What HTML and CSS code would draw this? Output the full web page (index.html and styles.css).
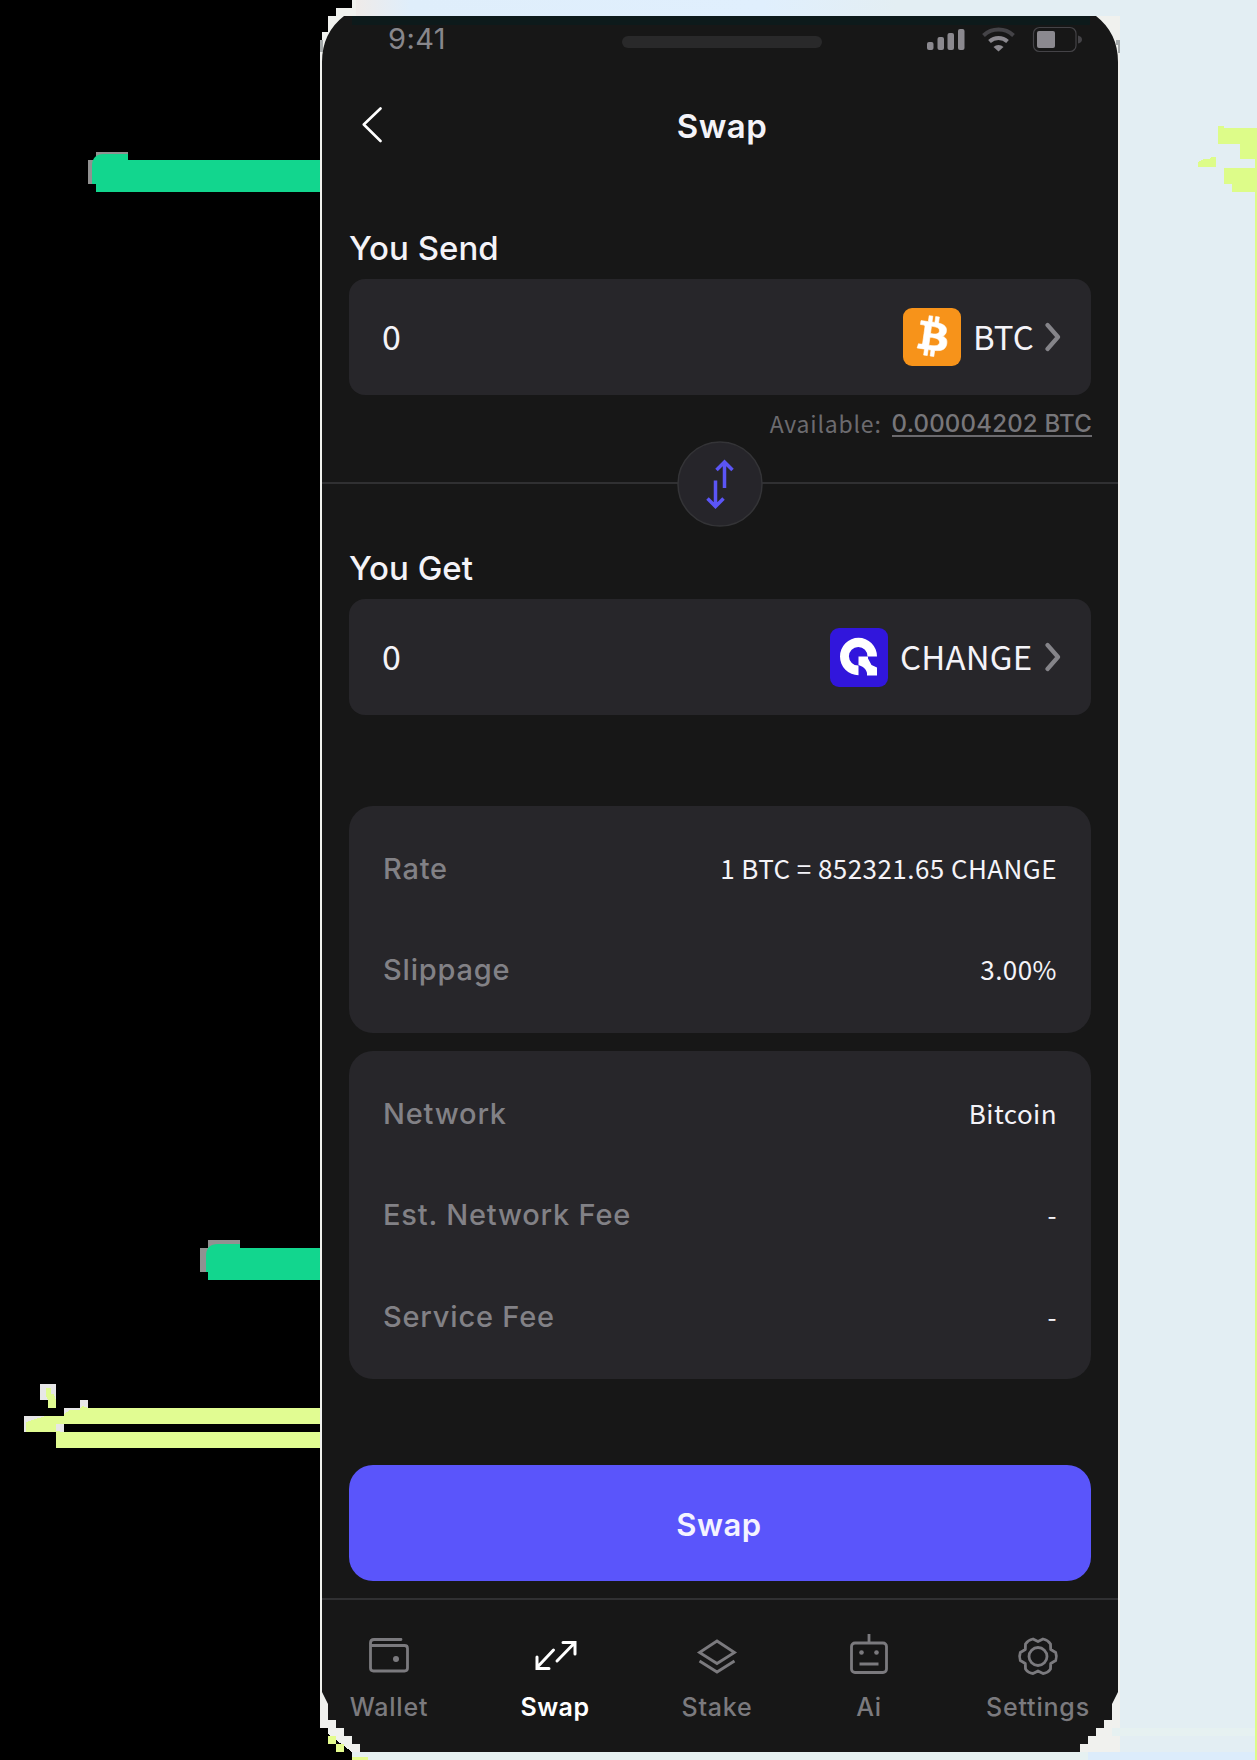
FILE: index.html
```html
<!DOCTYPE html>
<html lang="en">
<head>
<meta charset="utf-8">
<title>Swap</title>
<link rel="stylesheet" href="styles.css">
</head>
<body>
<svg class="backdrop" viewBox="0 0 1257 1760" aria-hidden="true">
  <defs>
    <linearGradient id="sky" x1="0" x2="1" y1="0" y2="0">
      <stop offset="0" stop-color="#efebe9"/><stop offset=".06" stop-color="#dfeefb"/><stop offset=".45" stop-color="#e0effd"/><stop offset=".6" stop-color="#e3eef3"/>
    </linearGradient>
  </defs>
  <g shape-rendering="crispEdges">
    <path fill="#12d68e" d="M96 160h224v32H96z"/>
    <path fill="#919191" d="M96 152h32v8H96zM88 160h8v24h-8z"/>
    <path fill="#12d68e" d="M208 1248h112v32H208z"/>
    <path fill="#919191" d="M208 1240h32v8h-32zM200 1248h8v24h-8z"/>
    <path fill="#e7e7e7" d="M40 1384h16v16H40zM24 1416h24v16H24zM64 1408h16v8H64zM80 1400h8v8h-8zM56 1424h8v8h-8z"/>
    <path fill="#e1fc92" d="M46 1388h5v6h3l2 6v8h-8v-8l-2-4zM26 1432v-10l6-2 14-4h18v-2l6-4h10v-2l3-2 5 2h232v16H64v0h-8v8zM56 1431l8 1h256v16H56z"/>
    <path fill="#f0f1ee" d="M352 0h905v1760H352v-8l-32-24V40h2v-8h-2v0h8V16h8V8h16z"/>
    <path fill="url(#sky)" d="M356 0h901v16H356z"/>
    <path fill="#e3eef3" d="M1120 14h137v1738h-137z"/>
    <path fill="#e6f1f1" d="M352 1752h905v8H352zM1112 1728h145v8h-145z"/>
    <path fill="#dcecfb" d="M1088 1752h167v8h-167z"/>
    <path fill="#000" d="M320 1728h8v8h8v8h8v8h8v8h-32z"/>
    <path fill="#e4fc8e" d="M328 1736h8v8h8v8h-8v-8h-8zM352 1757h16v3h-16z"/>
    <path fill="#ddfc89" d="M1218 126h6v2h33v1632h-2V192h-23v-8h-8v-16h31v-9h-15v-15h-22zM1198 162l6-3 6 0 1-2h5v10h-18z"/>
    <path fill="#a5aaab" d="M320 40h3v12h-3zM1116 40h4v13h-2v-8h-2z"/>
  </g>
  <path fill="#12d68e" d="M92 184v-18q0-12 12-12h24v8h-32v22zM206 1272v-16q0-12 12-12h22v8h-28v20z"/>
  <path fill="#171717" d="M344 16h752q22 17 22 46v1630l-6 12v16h-8v8h-8v8h-8v8h-8v8H360v-8h-8v-8h-8v-8h-8v-8h-8v-16l-6-12V62q0-29 22-46z"/>
  <path fill="#0d1a1b" d="M352 16h738v9H352z"/>
</svg>

<main class="phone">
  <div class="status">
    <span class="time">9:41</span>
    <span class="speaker"></span>
    <svg class="indicators" width="160" height="28" viewBox="0 0 160 28">
      <g fill="#8b898f">
        <rect x="1" y="16" width="6.5" height="8" rx="2"/><rect x="11.5" y="11" width="6.5" height="13" rx="2"/><rect x="21.5" y="7" width="6.5" height="17" rx="2"/><rect x="32" y="3" width="6.5" height="21" rx="2"/>
        <path d="M72.500 25.500L67.500 21a7.500 7.500 0 0 1 10 0z"/>
      </g>
      <path d="M63.500 15.500a13.500 13.500 0 0 1 18 0" fill="none" stroke="#8b898f" stroke-width="4"/>
      <path d="M57.500 9.500a22 22 0 0 1 30 0" fill="none" stroke="#444347" stroke-width="4"/>
      <rect x="107.500" y="1.500" width="42.500" height="24" rx="6" fill="none" stroke="#444347" stroke-width="1.200"/>
      <rect x="111" y="5" width="18" height="17" rx="2" fill="#8b898f"/>
      <path d="M152 9.500v8q4-1 4-4t-4-4z" fill="#444347"/>
    </svg>
  </div>

  <header class="header">
    <svg class="back" width="22" height="38" viewBox="0 0 22 38"><path d="M18.500 1.500L1.800 17.500l16.700 16.500" fill="none" stroke="#fff" stroke-width="2.600" stroke-linecap="round" stroke-linejoin="round"/></svg>
    <h1 class="title">Swap</h1>
  </header>

  <section class="send">
    <h2 class="label">You Send</h2>
    <div class="field">
      <span class="amount">0</span>
      <svg class="coin" width="58" height="58" viewBox="0 0 58 58">
        <rect width="58" height="58" rx="9" fill="#f7931a"/>
        <path transform="translate(29 28.500) rotate(-6) scale(2.060) translate(-15.900 -16.200)" fill="#fff" stroke="#fff" stroke-width=".3" d="M23.189 14.020c.314-2.096-1.283-3.223-3.465-3.975l.708-2.840-1.728-.430-.690 2.765c-.454-.114-.920-.220-1.385-.326l.695-2.783L15.596 6l-.708 2.839c-.376-.086-.746-.170-1.104-.260l.002-.009-2.384-.595-.460 1.846s1.283.294 1.256.312c.700.175.826.638.805 1.006l-.806 3.235c.048.012.110.030.180.057l-.183-.045-1.130 4.532c-.086.212-.303.531-.793.410.018.025-1.256-.313-1.256-.313l-.858 1.978 2.250.561c.418.105.828.215 1.231.318l-.715 2.872 1.727.430.708-2.840c.472.127.930.245 1.378.357l-.706 2.828 1.728.430.715-2.866c2.948.558 5.164.333 6.097-2.333.752-2.146-.037-3.385-1.588-4.192 1.130-.260 1.980-1.003 2.207-2.538zm-3.950 5.538c-.533 2.147-4.148.986-5.320.695l.950-3.805c1.172.293 4.929.872 4.370 3.110zm.535-5.569c-.487 1.953-3.495.960-4.470.717l.860-3.450c.975.243 4.118.696 3.610 2.733z"/>
      </svg>
      <span class="coin-name btc">BTC</span>
      <svg class="chevron" width="16" height="30" viewBox="0 0 16 30"><path d="M2.500 3L13 15 2.500 27" fill="none" stroke="#858489" stroke-width="4.200" stroke-linecap="round" stroke-linejoin="round"/></svg>
    </div>
    <p class="available"><span class="available-label">Available:</span><span class="available-value">0.00004202 BTC</span></p>
  </section>

  <div class="divider">
    <svg class="flip" width="86" height="86" viewBox="0 0 86 86"><circle cx="43" cy="43" r="42" fill="#26252a" stroke="#343437" stroke-width="1.500"/><g fill="none" stroke="#5b55f6" stroke-width="3.500"><path d="M47.500 47V22M39.500 29l8-8 8 8"/><path d="M38.500 39.500V65M30.500 57.500l8 8 8-8"/></g></svg>
  </div>

  <section class="get">
    <h2 class="label">You Get</h2>
    <div class="field">
      <span class="amount">0</span>
      <svg class="coin" width="58" height="59" viewBox="0 0 58 59">
        <rect width="58" height="59" rx="9" fill="#3116dc"/>
        <path fill="#fff" d="M47 28.500A18.500 18.800 0 1 0 28.500 47.300V37.500A9.300 9.300 0 1 1 37.500 28.500z"/>
        <path fill="#fff" d="M28.500 28.500h9.500v2l3.500 6.500 5.500 2.500v8H37v-2.500Q36 40.500 32 38.500L28.500 37z"/>
      </svg>
      <span class="coin-name change">CHANGE</span>
      <svg class="chevron" width="16" height="30" viewBox="0 0 16 30"><path d="M2.500 3L13 15 2.500 27" fill="none" stroke="#858489" stroke-width="4.200" stroke-linecap="round" stroke-linejoin="round"/></svg>
    </div>
  </section>

  <dl class="card rates">
    <div class="row"><dt>Rate</dt><dd class="rate">1 BTC = 852321.65 CHANGE</dd></div>
    <div class="row"><dt>Slippage</dt><dd>3.00%</dd></div>
  </dl>
  <dl class="card fees">
    <div class="row"><dt>Network</dt><dd class="network">Bitcoin</dd></div>
    <div class="row"><dt>Est. Network Fee</dt><dd>-</dd></div>
    <div class="row"><dt>Service Fee</dt><dd>-</dd></div>
  </dl>

  <button class="submit">Swap</button>

  <nav class="tabs">
    <a class="tab wallet">
      <svg width="44" height="44" viewBox="0 0 44 44"><g fill="none" stroke="#7b7a7e" stroke-width="2.800" stroke-linecap="round"><path d="M34 5.500H7q-3.500 0-3.500 3.500v25q0 3 3 3h31q3 0 3-3V14.500q0-3-3-3H4"/></g><circle cx="29" cy="25" r="3" fill="#7b7a7e"/></svg>
      <span>Wallet</span>
    </a>
    <a class="tab swap active">
      <svg width="44" height="44" viewBox="0 0 44 44"><path d="M20.500 16L4 33.500M4 23v11.500h12M24 27L41 9.500M30 8.500h12V20" fill="none" stroke="#fff" stroke-width="3" stroke-linecap="round"/></svg>
      <span>Swap</span>
    </a>
    <a class="tab stake">
      <svg width="44" height="44" viewBox="0 0 44 44"><path d="M22 7l17.500 11.500-17.500 11-17.500-11zM4.500 27L22 38l17.500-11" fill="none" stroke="#7b7a7e" stroke-width="2.800"/></svg>
      <span>Stake</span>
    </a>
    <a class="tab ai">
      <svg width="44" height="44" viewBox="0 0 44 44"><g fill="none" stroke="#7b7a7e" stroke-width="2.800"><rect x="4.500" y="9" width="35" height="29.500" rx="3.500"/><path d="M22 0v9M12.500 30h19"/></g><circle cx="14.500" cy="18.500" r="2.300" fill="#7b7a7e"/><circle cx="29.500" cy="18.500" r="2.300" fill="#7b7a7e"/></svg>
      <span>Ai</span>
    </a>
    <a class="tab settings">
      <svg width="44" height="44" viewBox="0 0 44 44"><g fill="none" stroke="#7b7a7e" stroke-width="2.800" stroke-linejoin="round"><path d="M22 7.500l5-2.500q5 1 7.500 5l.200 5.500 5 3q1.500 4 0 8l-5 3-.200 5.500q-2.500 4-7.500 4.500l-5-2.500-5 2.500q-5-.500-7.500-4.500l-.200-5.500-5-3q-1.500-4 0-8l5-3 .200-5.500q2.500-4 7.500-5z"/><circle cx="22" cy="22.500" r="9"/></g></svg>
      <span>Settings</span>
    </a>
  </nav>
</main>
</body>
</html>
```

FILE: styles.css
```css
* { box-sizing: border-box; }
body {
  margin: 0;
  width: 1257px;
  height: 1760px;
  overflow: hidden;
  background: #000;
  color: #f4f3f8;
  font-family: Inter, "Liberation Sans", sans-serif;
}
h1, h2, p, dl, dd { margin: 0; }
.backdrop {
  position: absolute;
  z-index: -1;
  top: 0;
  left: 0;
  width: 1257px;
  height: 1760px;
}
.phone {
  display: flex;
  flex-direction: column;
  width: 796px;
  height: 1752px;
  margin-left: 322px;
  padding-top: 16px;
}
.status {
  display: grid;
  grid-template-columns: 300px 200px 1fr;
  height: 50px;
}
.time {
  padding: 6px 0 0 66px;
  color: #88878c;
  font-size: 29px;
  line-height: 34px;
  letter-spacing: .4px;
}
.speaker {
  height: 12px;
  margin-top: 20px;
  border-radius: 6px;
  background: #29292a;
}
.indicators { margin: 10px 0 0 104px; }
.header {
  display: grid;
  grid-template-columns: 62px 1fr 58px;
  align-items: center;
  height: 119px;
}
.back { justify-self: end; }
.title {
  font-size: 33px;
  font-weight: 600;
  line-height: 40px;
  text-align: center;
  letter-spacing: .5px;
}
.send, .get { padding: 0 27px; }
.send { height: 297px; padding-top: 43px; }
.get { height: 322px; padding-top: 64px; }
.label {
  height: 51px;
  font-size: 33px;
  font-weight: 500;
  line-height: 40px;
}
.field {
  display: flex;
  align-items: center;
  height: 116px;
  padding: 0 30px 0 33px;
  border-radius: 16px;
  background: #27262a;
}
.amount, .coin-name, .available-label, dd {
  font-family: "Noto Sans CJK SC", "Noto Sans", sans-serif;
  font-weight: 400;
}
.amount { flex: 1; padding-bottom: 3px; font-size: 34px; line-height: 50px; }
.coin-name {
  margin-left: 12px;
  padding-bottom: 3px;
  font-size: 33px;
  line-height: 50px;
  white-space: nowrap;
}
.btc { width: 72px; }
.change { width: 145px; letter-spacing: .2px; }
.available {
  display: flex;
  justify-content: flex-end;
  gap: 10px;
  height: 50px;
  margin-right: -1px;
  padding-top: 14px;
  color: #77767a;
  font-size: 24px;
  line-height: 30px;
  white-space: nowrap;
}
.available-label {
  color: #6c6b6f;
  font-size: 23px;
  line-height: 28px;
  letter-spacing: .8px;
}
.available-value {
  height: 28px;
  border-bottom: 2px solid #6b6a6e;
  font-weight: 500;
  letter-spacing: .2px;
}
.divider {
  display: flex;
  justify-content: center;
  height: 2px;
  background: #303032;
}
.flip { flex: none; margin: -41px 0 0 0; }
.card {
  margin: 0 27px;
  padding: 12px 34px;
  border-radius: 24px;
  background: #27262a;
}
.rates { height: 227px; }
.fees { height: 328px; margin-top: 18px; }
.row {
  display: flex;
  justify-content: space-between;
  align-items: center;
  height: 101.500px;
}
dt {
  color: #828186;
  font-size: 29px;
  font-weight: 500;
  line-height: 40px;
  letter-spacing: .8px;
}
dd {
  padding-bottom: 2px;
  font-size: 26px;
  line-height: 40px;
  letter-spacing: .45px;
  white-space: nowrap;
}
.submit {
  height: 116px;
  margin: 86px 27px 0;
  padding: 2px 2px 0 0;
  border: 0;
  border-radius: 24px;
  background: #5a55fb;
  color: #f4f3ff;
  font: 600 31px Inter, sans-serif;
  letter-spacing: .5px;
}
.tabs {
  display: grid;
  grid-template-columns: 134px 198px 126px 178px 160px;
  height: 154px;
  margin-top: 17px;
  border-top: 2px solid #303032;
}
.tab {
  display: flex;
  flex-direction: column;
  align-items: center;
  gap: 14px;
  padding-top: 34px;
  color: #7b7a7e;
  font-size: 25px;
  font-weight: 500;
  line-height: 30px;
  letter-spacing: .8px;
}
.active { color: #fff; font-weight: 600; letter-spacing: .5px; }
```
